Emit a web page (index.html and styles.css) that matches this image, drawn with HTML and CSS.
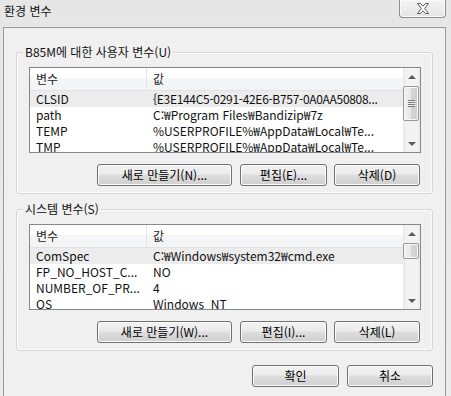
FILE: index.html
```html
<!DOCTYPE html>
<html lang="ko">
<head>
<meta charset="utf-8">
<title>환경 변수</title>
<link rel="stylesheet" href="styles.css">
</head>
<body>
<div class="window">
  <div class="titlebar">
    <span class="title">환경 변수</span>
    <div class="close">
      <svg width="14" height="11" viewBox="0 0 14 11">
        <path d="M1.5 0.5 H4.5 L7 3.2 L9.5 0.5 H12.5 L8.7 5.5 L12.5 10.5 H9.5 L7 7.8 L4.5 10.5 H1.5 L5.3 5.5 Z" fill="#fff" stroke="#5a5a5a" stroke-width="1" stroke-linejoin="round"/>
      </svg>
    </div>
  </div>
  <div class="client">
    <div class="group">
      <span class="group-label">B85M에 대한 사용자 변수(U)</span>
      <div class="list">
        <div class="list-body">
          <div class="header"><div class="c1">변수</div><div class="c2">값</div></div>
          <div class="row sel"><div class="c1">CLSID</div><div class="c2 tight">{E3E144C5-0291-42E6-B757-0A0AA50808...</div></div>
          <div class="row"><div class="c1">path</div><div class="c2">C:₩Program Files₩Bandizip₩7z</div></div>
          <div class="row"><div class="c1">TEMP</div><div class="c2">%USERPROFILE%₩AppData₩Local₩Te...</div></div>
          <div class="row"><div class="c1">TMP</div><div class="c2">%USERPROFILE%₩AppData₩Local₩Te...</div></div>
        </div>
        <div class="scrollbar">
          <div class="arrow"><span class="tri-up"></span></div>
          <div class="thumb thumb-big"><span class="grip"></span></div>
          <div class="track"></div>
          <div class="arrow"><span class="tri-down"></span></div>
        </div>
      </div>
      <div class="buttons">
        <button class="btn btn-wide">새로 만들기(N)...</button>
        <button class="btn">편집(E)...</button>
        <button class="btn btn-del">삭제(D)</button>
      </div>
    </div>

    <div class="group group2">
      <span class="group-label">시스템 변수(S)</span>
      <div class="list">
        <div class="list-body">
          <div class="header"><div class="c1">변수</div><div class="c2">값</div></div>
          <div class="row sel"><div class="c1">ComSpec</div><div class="c2">C:₩Windows₩system32₩cmd.exe</div></div>
          <div class="row"><div class="c1">FP_NO_HOST_C...</div><div class="c2">NO</div></div>
          <div class="row"><div class="c1">NUMBER_OF_PR...</div><div class="c2">4</div></div>
          <div class="row"><div class="c1">OS</div><div class="c2">Windows_NT</div></div>
        </div>
        <div class="scrollbar">
          <div class="arrow"><span class="tri-up"></span></div>
          <div class="thumb thumb-small"></div>
          <div class="track"></div>
          <div class="arrow"><span class="tri-down"></span></div>
        </div>
      </div>
      <div class="buttons">
        <button class="btn btn-wide">새로 만들기(W)...</button>
        <button class="btn">편집(I)...</button>
        <button class="btn btn-del">삭제(L)</button>
      </div>
    </div>

    <div class="dialog-buttons">
      <button class="btn">확인</button>
      <button class="btn btn-del">취소</button>
    </div>
  </div>
</div>
</body>
</html>
```

FILE: styles.css
```css
* { box-sizing: border-box; }
html, body { margin: 0; padding: 0; }
body {
  width: 451px;
  height: 396px;
  overflow: hidden;
  font-family: "Noto Sans CJK KR", sans-serif;
  font-size: 12px;
  color: #000;
}
.window {
  width: 451px;
  height: 396px;
  background: linear-gradient(#e6e6e6, #ebebeb);
  display: flex;
  flex-direction: column;
}
.titlebar {
  height: 27px;
  display: flex;
  justify-content: space-between;
  align-items: flex-start;
  flex: none;
}
.title {
  padding-left: 4px;
  padding-top: 3px;
  line-height: 16px;
  color: #111;
}
.close {
  width: 47px;
  height: 18px;
  margin-right: 5px;
  border: 1px solid #8e8e8e;
  border-top: none;
  border-radius: 0 0 4px 4px;
  background: linear-gradient(#f4f4f4, #e4e4e4);
  box-shadow: inset 0 0 0 1px #fafafa;
  display: flex;
  align-items: center;
  justify-content: center;
}
.close svg { display: block; }
.client {
  flex: 1;
  margin-left: 3px;
  width: 443px;
  border: 1px solid #9a9a9a;
  border-bottom: none;
  background: #f0f0f0;
  padding: 24px 12px 0 12px;
}
.group {
  position: relative;
  border: 1px solid #d5d5d5;
  border-radius: 3px;
  box-shadow: inset 0 0 0 1px #fbfbfb;
  padding: 14px 11px 7px 12px;
}
.group2 { margin-top: 15px; }
.group-label {
  position: absolute;
  left: 6px;
  top: -8px;
  padding: 0 2px;
  line-height: 14px;
  background: #f0f0f0;
  color: #111;
}
.list {
  height: 86px;
  border: 1px solid #828790;
  background: #fff;
  display: flex;
  overflow: hidden;
}
.list-body {
  flex: 1;
  overflow: hidden;
}
.header {
  height: 23px;
  display: flex;
  border-bottom: 1px solid #e0e2e5;
  background: linear-gradient(#ffffff 0, #ffffff 45%, #f5f6f7 45%, #f2f3f5 100%);
  line-height: 22px;
  color: #1e1e1e;
}
.header .c1 { border-right: 1px solid #e3e4e6; }
.row {
  height: 16px;
  line-height: 16px;
  display: flex;
  color: #111;
}
.row.sel { background: #ececec; }
.c1 {
  width: 117px;
  flex: none;
  padding-left: 6px;
  white-space: nowrap;
  overflow: hidden;
}
.c2 {
  flex: 1;
  padding-left: 6px;
  white-space: nowrap;
  overflow: hidden;
}
.tight { letter-spacing: -0.3px; }
.scrollbar {
  width: 17px;
  flex: none;
  display: flex;
  flex-direction: column;
  background: linear-gradient(90deg, #e8e8e8, #f2f2f2 20%, #f4f4f4 80%, #e9e9e9);
}
.arrow {
  height: 17px;
  flex: none;
  display: flex;
  align-items: center;
  justify-content: center;
}
.tri-up {
  width: 0; height: 0;
  border-left: 4px solid transparent;
  border-right: 4px solid transparent;
  border-bottom: 4px solid #5c5c5c;
}
.tri-down {
  width: 0; height: 0;
  border-left: 4px solid transparent;
  border-right: 4px solid transparent;
  border-top: 4px solid #5c5c5c;
}
.thumb {
  flex: none;
  margin: 1px 1px 0 0;
  border: 1px solid #979797;
  border-radius: 2px;
  background: linear-gradient(90deg, #f2f2f2, #e6e6e6 50%, #d6d6d6 50%, #cdcdcd);
  box-shadow: inset 0 0 0 1px #f8f8f8;
  display: flex;
  align-items: center;
  justify-content: center;
}
.thumb-big { height: 35px; }
.thumb-small { height: 16px; }
.grip {
  width: 7px;
  height: 7px;
  background: repeating-linear-gradient(#7d7d7d 0, #7d7d7d 1px, #eeeeee 1px, #eeeeee 2px);
}
.track { flex: 1; }
.buttons {
  display: flex;
  justify-content: flex-end;
  gap: 8px;
  margin-top: 11px;
  padding-right: 1px;
}
.btn {
  font-family: "Noto Sans CJK KR", sans-serif;
  font-size: 12px;
  color: #000;
  height: 22px;
  width: 87px;
  padding: 0;
  line-height: 18px;
  border: 1px solid #707070;
  border-radius: 3px;
  background: linear-gradient(#f2f2f2 0, #ebebeb 45%, #dddddd 50%, #cfcfcf 100%);
  box-shadow: inset 0 0 0 1px #fbfbfb;
}
.btn-wide { width: 135px; }
.btn-del { width: 86px; }
.buttons .btn-del { margin-left: -1px; }
.dialog-buttons {
  display: flex;
  justify-content: flex-end;
  gap: 8px;
  margin-top: 14px;
}
```
